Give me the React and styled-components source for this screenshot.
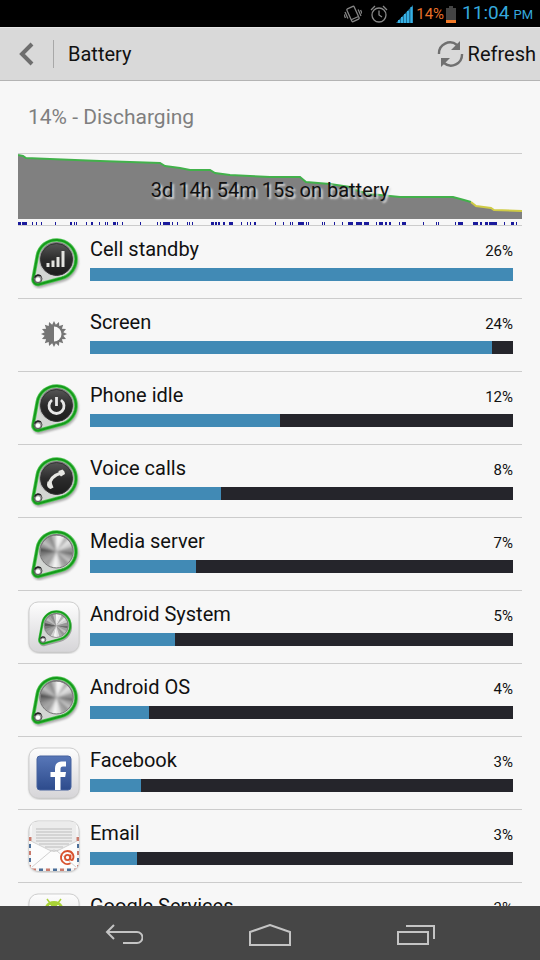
import React from 'react';
import styled, { createGlobalStyle } from 'styled-components';

const colors = {
  page: '#f7f7f7',
  header: '#d9d9d9',
  line: '#cccccc',
  grey: '#7f7f7f',
  blue: '#418ab5',
  track: '#25252b',
  holo: '#35a8dc',
  orange: '#e8702a',
  nav: '#464646',
};

const GlobalStyle = createGlobalStyle`
  * {
    box-sizing: border-box;
  }
  body {
    margin: 0;
    background: ${colors.page};
    font-family: Roboto, 'Liberation Sans', sans-serif;
  }
  button {
    margin: 0;
    padding: 0;
    border: 0;
    background: none;
    color: inherit;
    font: inherit;
    cursor: pointer;
  }
`;

const Screen = styled.div`
  display: flex;
  flex-direction: column;
  height: 100vh;
  overflow: hidden;
  color: #111;
`;

/*  Status bar  */
const StatusBar = styled.div`
  display: flex;
  flex: none;
  align-items: center;
  justify-content: flex-end;
  height: 27px;
  padding: 1px 7px 0 0;
  background: #000;
  color: ${colors.holo};
`;

const StatusIcons = styled.div`
  display: flex;
  align-items: center;
  gap: 8px;
  margin-right: 3px;
`;

const StatusPercent = styled.span`
  margin-right: 2px;
  color: ${colors.orange};
  font-size: 15px;
`;

const Clock = styled.time`
  margin-left: 6px;
  font-size: 19px;
  line-height: 26px;
`;

const Meridiem = styled.span`
  margin-left: 4px;
  font-size: 13px;
`;

/*  Header  */
const Header = styled.header`
  display: flex;
  flex: none;
  align-items: center;
  height: 54px;
  padding: 0 4px 0 18px;
  border-top: 1px solid #e8e8e8;
  border-bottom: 1px solid #b4b4b4;
  background: ${colors.header};
  font-size: 20px;
`;

const BackButton = styled.button`
  display: flex;
  align-items: center;
  width: 36px;
  height: 28px;
  border-right: 1px solid #a8a8a8;
`;

const Title = styled.h1`
  flex: 1;
  margin: 0 0 0 14px;
  font-size: 20px;
  font-weight: 400;
`;

const RefreshButton = styled.button`
  display: flex;
  align-items: center;
  gap: 4px;
`;

/*  Content  */
const Content = styled.main`
  flex: 1;
  min-height: 0;
  padding: 0 18px;
  overflow: hidden;
`;

const Status = styled.p`
  margin: 0;
  padding: 0 10px;
  color: ${colors.grey};
  font-size: 21px;
  line-height: 72px;
`;

const History = styled.section`
  display: grid;
  border-top: 1px solid ${colors.line};
  border-bottom: 1px solid ${colors.line};
`;

const HistoryChart = styled.svg`
  display: block;
  grid-area: 1 / 1;
  width: 100%;
  height: 71px;
`;

const HistoryLabel = styled.p`
  grid-area: 1 / 1;
  align-self: center;
  margin: 0;
  font-size: 20px;
  line-height: 24px;
  text-align: center;
  text-shadow: 2px 2px 2px #ddd;
`;

const UsageList = styled.ul`
  margin: 0;
  padding: 0;
  list-style: none;
`;

const UsageRow = styled.li`
  display: flex;
  align-items: center;
  height: 73px;
  padding: 0 9px;
  border-bottom: 1px solid ${colors.line};
`;

const UsageBody = styled.div`
  flex: 1;
  margin-left: 9px;
`;

const UsageText = styled.div`
  display: flex;
  align-items: baseline;
  justify-content: space-between;
  margin-bottom: 5px;
  font-size: 20px;
  line-height: 24px;
`;

const UsagePercent = styled.span`
  font-size: 15px;
`;

const Track = styled.div`
  height: 13px;
  margin-bottom: 6px;
  background: ${colors.track};
`;

const Fill = styled.div`
  height: 100%;
  background: ${colors.blue};
`;

/*  Navigation bar  */
const NavBar = styled.nav`
  display: flex;
  flex: none;
  justify-content: center;
  height: 54px;
  padding-top: 3px;
  background: ${colors.nav};
`;

const NavButton = styled.button`
  display: flex;
  align-items: center;
  justify-content: center;
  width: 27%;
`;

const Icon = styled.svg`
  display: block;
  flex: none;
`;

const HiddenSvg = styled.svg`
  position: absolute;
  width: 0;
  height: 0;
`;

const SharedDefs = () => (
  <HiddenSvg aria-hidden="true">
    <defs>
      <linearGradient id="dark" x1="0" y1="0" x2="0" y2="1">
        <stop offset="0" stopColor="#555" />
        <stop offset="0.5" stopColor="#2c2c2c" />
        <stop offset="1" stopColor="#1c1c1c" />
      </linearGradient>
      <linearGradient id="rim" x1="0" y1="0" x2="0" y2="1">
        <stop offset="0" stopColor="#777" />
        <stop offset="1" stopColor="#d8d8d8" />
      </linearGradient>
      <linearGradient id="tile" x1="0" y1="0" x2="0" y2="1">
        <stop offset="0" stopColor="#fdfdfd" />
        <stop offset="1" stopColor="#d6d5d8" />
      </linearGradient>
      <linearGradient id="facebook" x1="0" y1="0" x2="0" y2="1">
        <stop offset="0" stopColor="#5877b8" />
        <stop offset="1" stopColor="#2d4b8c" />
      </linearGradient>
      <filter id="soft" x="-20%" y="-20%" width="140%" height="140%">
        <feGaussianBlur stdDeviation="1" />
      </filter>
      <clipPath id="disc">
        <circle cx="29.5" cy="23.5" r="16" />
      </clipPath>
      <clipPath id="tileClip">
        <rect x="2" y="2" width="50" height="50" rx="9" />
      </clipPath>
    </defs>
  </HiddenSvg>
);

const DROP =
  'M10.3 20A19.500 19.500 0 1 1 34.400 42.300L12.300 48.300A5 5 0 0 1 6.100 42.600Z';

// brushed metal, one grey per wedge, clockwise from three o'clock
const METAL = [
  110, 160, 190, 150, 170, 225, 245, 210, 160, 165, 150, 120,
  85, 150, 190, 165, 140, 190, 245, 235, 180, 225, 205, 150,
];

const wedge = i => {
  const at = n => {
    const a = (n * Math.PI) / 12;
    return `${29.5 + 19 * Math.cos(a)} ${23.5 + 19 * Math.sin(a)}`;
  };
  return `M29.5 23.5L${at(i - 0.1)}L${at(i + 1.1)}Z`;
};

const Knob = ({ metal, children }) => (
  <g transform="translate(0 1)">
    <path d={DROP} transform="translate(1 2)" fill="#777" stroke="#777" strokeWidth="3" opacity="0.6" filter="url(#soft)" />
    <path d={DROP} fill="#d3d6d3" stroke="#4fc653" strokeWidth="3.6" />
    <path d={DROP} fill="none" stroke="#159a1b" strokeWidth="2" />
    <circle cx="29.5" cy="23.5" r="17.500" fill="url(#rim)" />
    {metal ? (
      <g clipPath="url(#disc)">
        <circle cx="29.5" cy="23.5" r="17" fill="#aaa" />
        <g filter="url(#soft)">
          {METAL.map((v, i) => (
            <path key={i} d={wedge(i)} fill={`rgb(${v},${v},${v})`} />
          ))}
        </g>
      </g>
    ) : (
      <circle cx="29.5" cy="23.5" r="16" fill="url(#dark)" stroke="#333" />
    )}
    {metal && <circle cx="29.5" cy="23.5" r="16.500" fill="none" stroke="#777" />}
    <circle cx="11" cy="42.800" r="4" fill="#999" stroke="#555" />
    <circle cx="11" cy="43.5" r="2.200" fill="#fff" />
    <path d="M7.8 41.500a4 4 0 0 1 6-1.500" fill="none" stroke="#222" strokeWidth="1.5" />
    {children}
  </g>
);

const Tile = ({ children }) => (
  <g>
    <rect x="2" y="3" width="50" height="50" rx="10" fill="#888" opacity="0.7" filter="url(#soft)" />
    <rect x="2" y="2" width="50" height="50" rx="9" fill="url(#tile)" stroke="#d0d0d0" />
    {children}
  </g>
);

// sixteen pointed teeth
const gearPoints = Array.from({ length: 32 }, (_, i) => {
  const a = (i * Math.PI) / 16;
  const r = i % 2 === 0 ? 13 : 9.5;
  return `${27 + r * Math.cos(a)},${26 + r * Math.sin(a)}`;
}).join(' ');

const icons = {
  signal: (
    <Knob>
      <path d="M20.500 31v-4h3v4zM25.500 31v-6.500h3V31zM30.500 31v-10h3v10zM35.500 31V15h3v16z" transform="translate(-1 0)" fill="#e4e4e0" />
    </Knob>
  ),
  screen: (
    <g>
      <polygon points={gearPoints} fill="#757575" />
      <path d="M27 18.500a7.500 7.500 0 0 1 0 15z" fill="#f7f7f7" />
    </g>
  ),
  power: (
    <Knob>
      <path d="M25 18a7.5 7.5 0 1 0 9 0M29.5 15v9" fill="none" stroke="#e6e6e6" strokeWidth="2.8" />
    </Knob>
  ),
  phone: (
    <Knob>
      <path d="M22.500 30Q23 21.500 34 18" fill="none" stroke="#e8e8e4" strokeWidth="3.4" />
      <path d="M31.500 16l4-1.500q2.500 1.500 2.500 4.500l-4 2.500-2-2zM20.500 26.500l4 .5.8 2.500 1.200 3-3 1.500q-3.500-1.500-3.500-4.500z" fill="#e8e8e4" />
    </Knob>
  ),
  metal: <Knob metal />,
  system: (
    <Tile>
      <g transform="translate(8 8) scale(0.72)">
        <Knob metal />
      </g>
    </Tile>
  ),
  facebook: (
    <Tile>
      <rect x="10" y="10" width="34" height="34" rx="3" fill="url(#facebook)" stroke="#46629e" />
      <path d="M28 44V31h-4.500v-5H28v-3.500C28 18 30.500 15.500 34.500 15.500h4.500v5h-3c-2 0-2.500 1-2.500 2.500v3H39l-.8 5h-4.700v13z" fill="#fff" />
    </Tile>
  ),
  email: (
    <Tile>
      <g clipPath="url(#tileClip)">
        <rect x="2" y="17" width="50" height="35" fill="#f4f4f4" />
        <path d="M3 18v33M51 18v33M5 51h46" fill="none" stroke="#c97a6c" strokeWidth="3" strokeDasharray="4 10" />
        <path d="M3 25v26M51 25v26M12 51h39" fill="none" stroke="#4b6f99" strokeWidth="3" strokeDasharray="4 10" />
        <path d="M5 3h44v19L27 34 5 22z" fill="#ececec" />
        <path d="M9 10h36M9 13h36M9 16h36M9 19h36M9 22h36M12 25h30M18 28h18" stroke="#bcbcbc" />
        <path d="M4 22l18 9q5 3 10 0l18-9v27H4z" fill="#fcfcfc" />
        <path d="M4 22l18 9q5 3 10 0l18-9M5 48l19-16q3-2 6 0l19 16" fill="none" stroke="#cfcfcf" />
      </g>
      <circle cx="40.5" cy="38.5" r="2.6" fill="none" stroke="#d8512d" strokeWidth="1.8" />
      <path d="M43.5 35.5v4q0 2 2 1.500c2.500-4 0-9-5-9a6.500 6.500 0 1 0 3 12.200" fill="none" stroke="#d8512d" strokeWidth="1.8" />
    </Tile>
  ),
  android: (
    <Tile>
      <path d="M17 18c1-6 5-9 10-9s9 3 10 9z" fill="#a9d336" />
      <path d="M20 7l3 4M34 7l-3 4" stroke="#a9d336" strokeWidth="1.5" />
      <circle cx="23" cy="14" r="1" fill="#fff" />
      <circle cx="31" cy="14" r="1" fill="#fff" />
    </Tile>
  ),
};

const usage = [
  { name: 'Cell standby', percent: 26, fill: 100, icon: 'signal' },
  { name: 'Screen', percent: 24, fill: 95, icon: 'screen' },
  { name: 'Phone idle', percent: 12, fill: 45, icon: 'power' },
  { name: 'Voice calls', percent: 8, fill: 31, icon: 'phone' },
  { name: 'Media server', percent: 7, fill: 25, icon: 'metal' },
  { name: 'Android System', percent: 5, fill: 20, icon: 'system' },
  { name: 'Android OS', percent: 4, fill: 14, icon: 'metal' },
  { name: 'Facebook', percent: 3, fill: 12, icon: 'facebook' },
  { name: 'Email', percent: 3, fill: 11, icon: 'email' },
  { name: 'Google Services', percent: 3, fill: 10, icon: 'android' },
];

// battery level over time, split where the charge gets low
const greenLine =
  '0,1 5,2 8,4 32,5 82,7 142,9 147,12 162,14 172,16 192,16 197,19 212,21 232,22 252,23 282,23 288,28 312,30 332,33 340,37 352,40 372,42 382,43 435,43 446,46 453,48';
const yellowLine = '453,48 458,52 473,54 476,56 504,57';

// [start, width] of every time the phone was awake
const awake = [
  [0, 3], [4, 5], [14, 1], [18, 1], [23, 1], [37, 1], [52, 2], [56, 1],
  [58, 1], [68, 1], [73, 2], [81, 1], [87, 1], [89, 1], [95, 3], [99, 1],
  [104, 1], [122, 1], [139, 1], [142, 1], [145, 7], [154, 1], [159, 1],
  [169, 1], [171, 1], [174, 1], [193, 3], [197, 2], [200, 2], [205, 2],
  [211, 4], [223, 1], [229, 1], [232, 1], [236, 2], [257, 1], [265, 1],
  [272, 1], [274, 1], [280, 6], [288, 1], [290, 1], [304, 1], [306, 1],
  [316, 1], [324, 1], [330, 5], [338, 6], [346, 5], [358, 1], [361, 4],
  [367, 2], [371, 2], [381, 1], [384, 4], [405, 1], [418, 1], [420, 1],
  [437, 1], [440, 5], [455, 5], [462, 2], [467, 3], [471, 8], [486, 1],
  [493, 3], [498, 1],
];

const BatteryHistory = () => (
  <History>
    <HistoryChart viewBox="0 0 504 71" preserveAspectRatio="none" aria-hidden="true">
      <polygon points={`0,65 ${greenLine} ${yellowLine} 504,65`} fill="#808080" />
      <polyline points={greenLine} fill="none" stroke="#42b14b" strokeWidth="2" />
      <polyline points={yellowLine} fill="none" stroke="#cfcb45" strokeWidth="2" />
      {awake.map(([x, width]) => (
        <rect key={x} x={x} y="68" width={width} height="3" fill="#1a1a9c" />
      ))}
    </HistoryChart>
    <HistoryLabel>3d 14h 54m 15s on battery</HistoryLabel>
  </History>
);

const Usage = ({ name, percent, fill, icon }) => (
  <UsageRow>
    <Icon width="54" height="54" viewBox="0 0 54 54" aria-hidden="true">
      {icons[icon]}
    </Icon>
    <UsageBody>
      <UsageText>
        <span>{name}</span>
        <UsagePercent>{percent}%</UsagePercent>
      </UsageText>
      <Track>
        <Fill style={{ width: `${fill}%` }} />
      </Track>
    </UsageBody>
  </UsageRow>
);

const App = () => (
  <Screen>
    <GlobalStyle />
    <SharedDefs />
    <StatusBar>
      <StatusIcons>
        <Icon width="18" height="20" viewBox="0 0 18 20" fill="none" stroke="#858585" strokeWidth="1.3">
          <g transform="rotate(-24 9 10)">
            <rect x="5" y="3" width="8" height="14" rx="1" />
            <path d="M5 14.500h8M2.500 5v7M.5 6.500v4M15.500 8v7M17.500 9.500v4" />
          </g>
        </Icon>
        <Icon width="18" height="20" viewBox="0 0 18 20" fill="none" stroke="#888" strokeWidth="1.3">
          <circle cx="9" cy="11" r="7" />
          <path d="M9 6.5V11l3 2M1 6l4-4M17 6l-4-4" />
        </Icon>
        <Icon width="17" height="18" viewBox="0 0 17 18">
          <path d="M0 18L17 0v18z" fill="#1e6f96" />
          <path d="M3 18v-3M6 18v-6M9 18V9M12 18V6M15.5 18V2" stroke="#36b0e4" strokeWidth="2" />
        </Icon>
      </StatusIcons>
      <StatusPercent>14%</StatusPercent>
      <Icon width="10" height="17" viewBox="0 0 10 17">
        <path d="M3 0h4v2h3v12H0V2h3z" fill="#444" />
        <path d="M0 14h10v3H0z" fill="#f07826" />
      </Icon>
      <Clock>
        11:04<Meridiem>PM</Meridiem>
      </Clock>
    </StatusBar>
    <Header>
      <BackButton aria-label="Back">
        <Icon width="18" height="24" viewBox="0 0 18 24" fill="none" stroke="#6e6e6e" strokeWidth="4">
          <path d="M14 2L4 12l10 10" />
        </Icon>
      </BackButton>
      <Title>Battery</Title>
      <RefreshButton>
        <Icon width="27" height="28" viewBox="0 0 27 28" fill="none" stroke="#707070" strokeWidth="2.4">
          <path d="M2 14A11 11 0 0 1 20 5M25 14A11 11 0 0 1 7 23" />
          <path d="M23 1v9h-9zM4 27v-9h9z" fill="#707070" stroke="none" />
        </Icon>
        Refresh
      </RefreshButton>
    </Header>
    <Content>
      <Status>14% - Discharging</Status>
      <BatteryHistory />
      <UsageList>
        {usage.map(item => (
          <Usage key={item.name} {...item} />
        ))}
      </UsageList>
    </Content>
    <NavBar>
      <NavButton aria-label="Back">
        <Icon width="38" height="22" viewBox="0 0 38 22" fill="none" stroke="#c4c4c4" strokeWidth="2">
          <path d="M9 1L2 8l7 7M2 8h30a5.500 5.500 0 0 1 0 11H18" />
        </Icon>
      </NavButton>
      <NavButton aria-label="Home">
        <Icon width="42" height="22" viewBox="0 0 42 22" fill="none" stroke="#c4c4c4" strokeWidth="2">
          <path d="M1 21V8l20-7 20 7v13z" />
        </Icon>
      </NavButton>
      <NavButton aria-label="Recent apps">
        <Icon width="38" height="20" viewBox="0 0 38 20" fill="none" stroke="#c4c4c4" strokeWidth="2">
          <path d="M1 7h30v12H1zM9 1h28v13" />
        </Icon>
      </NavButton>
    </NavBar>
  </Screen>
);

export default App;
